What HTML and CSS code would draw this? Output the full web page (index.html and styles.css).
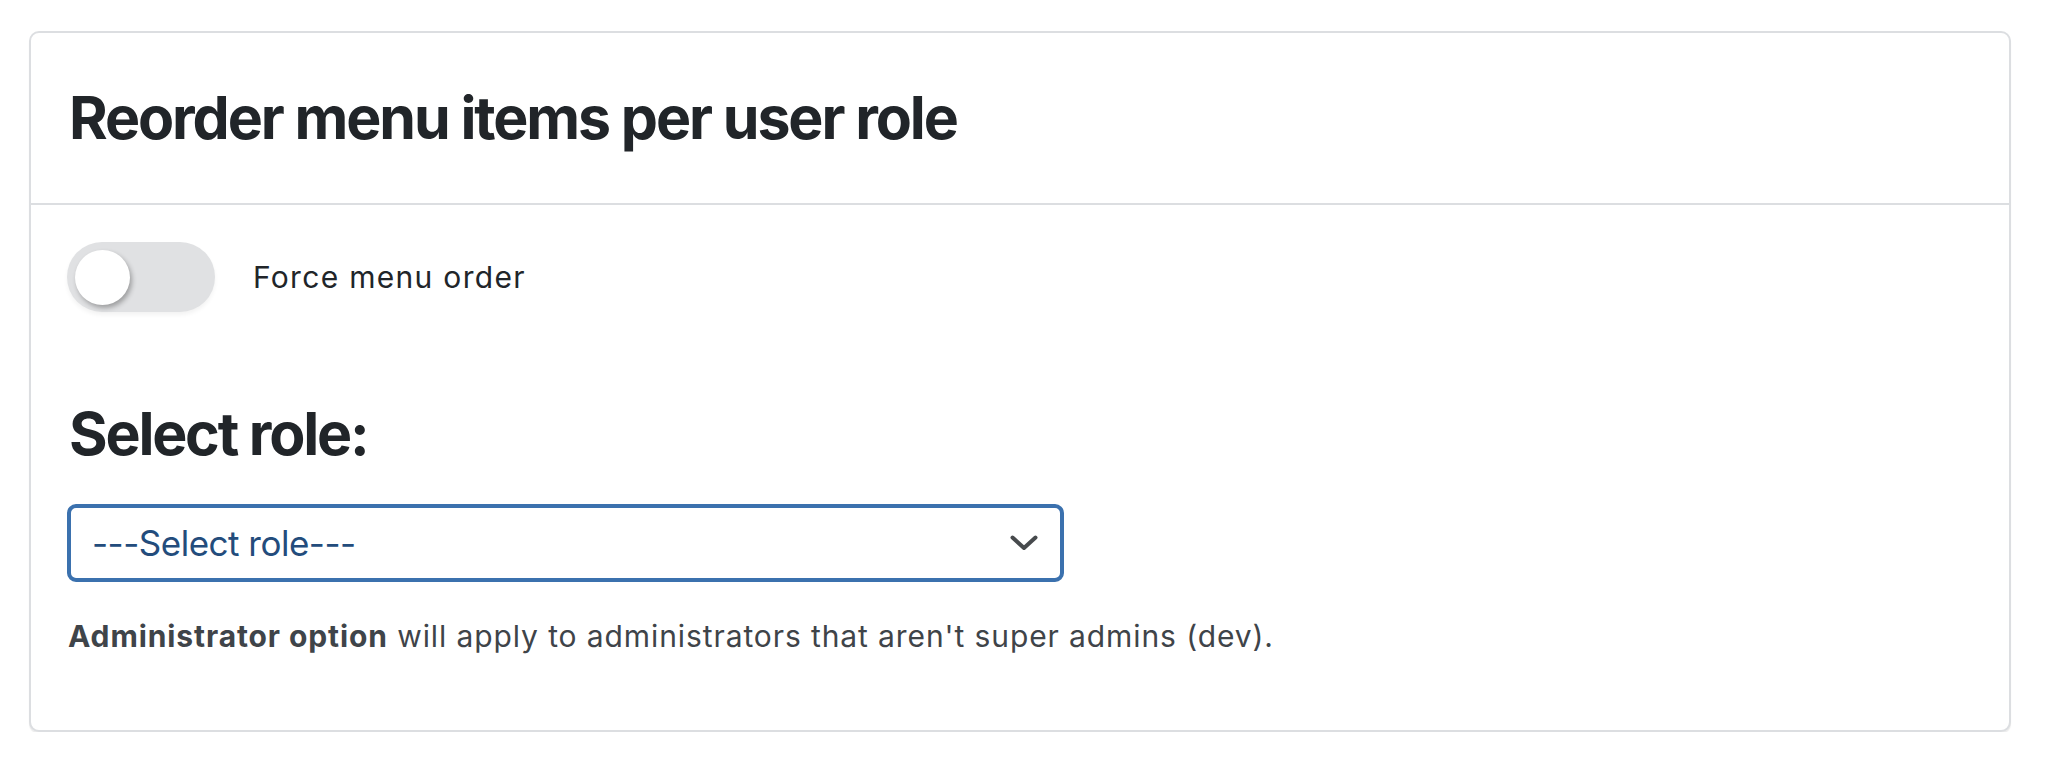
FILE: index.html
```html
<!DOCTYPE html>
<html lang="en">
<head>
<meta charset="utf-8">
<title>Reorder menu items per user role</title>
<link rel="stylesheet" href="styles.css">
</head>
<body>
<div class="card">
  <div class="card-header">
    <h3 class="card-title">Reorder menu items per user role</h3>
  </div>
  <div class="card-body">
    <div class="switch-row">
      <div class="switch"><span class="knob"></span></div>
      <span class="switch-label">Force menu order</span>
    </div>
    <h3 class="section-title">Select role:</h3>
    <div class="select">
      <span class="select-text">---Select role---</span>
      <svg class="chevron" width="28" height="16" viewBox="0 0 28 16" aria-hidden="true">
        <path d="M2.5 2.5 L14 13 L25.5 2.5" fill="none" stroke="#474a4d" stroke-width="4" stroke-linecap="round" stroke-linejoin="round"/>
      </svg>
    </div>
    <p class="help"><strong>Administrator option</strong> will apply to administrators that aren't super admins (dev).</p>
  </div>
</div>
</body>
</html>
```

FILE: styles.css
```css
html, body {
  margin: 0;
  padding: 0;
  background: #ffffff;
}

body {
  padding: 31px 37px 0 29px;
  font-family: Inter, "Liberation Sans", sans-serif;
  color: #212529;
}

.card {
  border: 2px solid #dcdee1;
  border-radius: 10px;
  box-shadow: 0 2px 1px rgba(0, 0, 0, 0.08);
  background: #fff;
}

.card-header {
  height: 170px;
  display: flex;
  align-items: center;
  padding-left: 38px;
  border-bottom: 2px solid #dcdee1;
}

.card-title {
  margin: 0;
  font-size: 59px;
  font-weight: 700;
  line-height: 1.2;
  letter-spacing: -2.1px;
  color: #212529;
}

.card-body {
  padding: 37px 38px 71px 36px;
}

.switch-row {
  display: flex;
  align-items: center;
  gap: 38px;
  height: 70px;
}

.switch {
  width: 148px;
  height: 70px;
  border-radius: 35px;
  background: #e0e1e3;
  display: flex;
  align-items: center;
  padding-left: 8px;
  box-sizing: border-box;
  box-shadow: 0 3px 4px rgba(0, 0, 0, 0.05);
}

.knob {
  width: 55px;
  height: 55px;
  border-radius: 50%;
  background: #fff;
  box-shadow: 2px 3px 5px rgba(0, 0, 0, 0.3);
}

.switch-label {
  font-size: 30px;
  font-weight: 400;
  letter-spacing: 1.3px;
  color: #212529;
}

.section-title {
  margin: 87px 0 0 2px;
  font-size: 59px;
  font-weight: 700;
  line-height: 1.2;
  letter-spacing: -2.2px;
  color: #212529;
}

.select {
  margin-top: 34px;
  width: 997px;
  height: 78px;
  box-sizing: border-box;
  border: 4px solid #3b71ae;
  border-radius: 9px;
  display: flex;
  align-items: center;
  justify-content: space-between;
  padding: 0 22px 0 21px;
}

.select-text {
  font-size: 35px;
  letter-spacing: -0.5px;
  color: #234c7c;
}

.chevron {
  display: block;
}

.help {
  margin: 32px 0 0 1px;
  font-size: 30px;
  line-height: 1.5;
  letter-spacing: 0.9px;
  color: #3f4449;
}

.help strong {
  font-weight: 700;
}
```
